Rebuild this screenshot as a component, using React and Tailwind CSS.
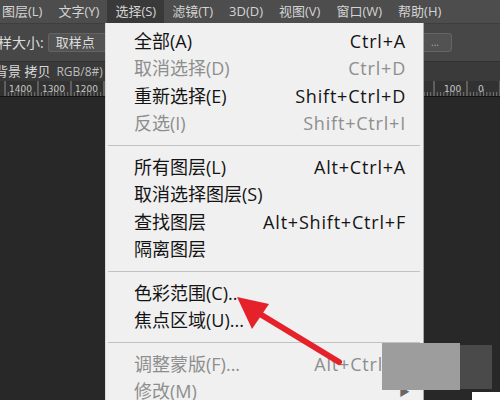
import React from 'react';

const menuFont = { fontFamily: '"Open Sans", "Noto Sans CJK SC", sans-serif' };

const topItems = ['图层(L)', '文字(Y)', '选择(S)', '滤镜(T)', '3D(D)', '视图(V)', '窗口(W)', '帮助(H)'];

const groups = [
  [
    { label: '全部(A)', key: 'Ctrl+A' },
    { label: '取消选择(D)', key: 'Ctrl+D', off: true },
    { label: '重新选择(E)', key: 'Shift+Ctrl+D' },
    { label: '反选(I)', key: 'Shift+Ctrl+I', off: true },
  ],
  [
    { label: '所有图层(L)', key: 'Alt+Ctrl+A' },
    { label: '取消选择图层(S)' },
    { label: '查找图层', key: 'Alt+Shift+Ctrl+F' },
    { label: '隔离图层' },
  ],
  [
    { label: '色彩范围(C)...' },
    { label: '焦点区域(U)...' },
  ],
  [
    { label: '调整蒙版(F)...', key: 'Alt+Ctrl+R', off: true },
    { label: '修改(M)', off: true, sub: true },
  ],
];

const Ruler = () => (
  <svg width="500" height="15" className="block">
    {Array.from({ length: 16 }).map((_, i) => {
      const x = 5 + i * 33;
      return (
        <g key={i}>
          <line x1={x} y1="0" x2={x} y2="15" stroke="#8a8a8a" strokeWidth="1" />
          {[1, 2, 3, 4, 5, 6, 7, 8, 9].map((j) => (
            <line key={j} x1={x + j * 3.3} y1={j === 5 ? 8 : 11} x2={x + j * 3.3} y2="15" stroke="#777" strokeWidth="1" />
          ))}
        </g>
      );
    })}
  </svg>
);

const App = () => {
  return (
    <div className="relative w-[500px] h-[400px] overflow-hidden bg-[#282828]" style={menuFont}>
      {/* menu bar */}
      <div className="h-[23px] bg-[#4d4d4d] flex items-center text-[13px] text-[#d4d4d4] ml-[-6px]">
        {topItems.map((t) => (
          <div key={t} className={`h-full flex items-center px-[8px] ${t === '选择(S)' ? 'bg-[#393939]' : ''}`}>
            {t}
          </div>
        ))}
      </div>

      {/* options bar */}
      <div className="h-[39px] bg-[#474747] border-t border-[#3e3e3e] border-b border-b-[#2f2f2f] flex items-center text-[14px] text-[#dcdcdc]">
        <span className="ml-[-2px]">样大小:</span>
        <div className="ml-[4px] w-[120px] h-[19px] bg-[#535353] border border-[#636363] rounded-[2px] flex items-center px-[7px] text-[13px]">
          取样点
        </div>
        <div className="ml-auto mr-[48px] w-[34px] h-[19px] bg-[#525252] border border-[#656565] rounded-[3px] flex items-center justify-center text-[10px] text-[#aaa]">
          ...
        </div>
      </div>

      {/* document tab */}
      <div className="h-[19px] bg-[#3a3a3a] flex items-center text-[13px] text-[#d8d8d8] whitespace-nowrap">
        <span className="ml-[-5px]">背景 拷贝</span>
        <span className="ml-[6px] text-[12px] text-[#bdbdbd]">RGB/8#)</span>
      </div>

      {/* ruler */}
      <div className="relative h-[16px] bg-[#323232] border-b border-[#141414]">
        <Ruler />
        <div className="absolute inset-0 text-[9px] text-[#c8c8c8] leading-[16px]" style={{ fontFamily: '"DejaVu Sans", sans-serif' }}>
          <span className="absolute left-[9px] top-0">1400</span>
          <span className="absolute left-[42px] top-0">1300</span>
          <span className="absolute left-[75px] top-0">1200</span>
          <span className="absolute left-[444px] top-0">100</span>
          <span className="absolute left-[478px] top-0">0</span>
        </div>
      </div>

      {/* dropdown menu */}
      <div className="absolute left-[105px] top-[23px] w-[319px] h-[390px] bg-[#f0f0f0] border-l border-[#d9d9d9] border-r border-r-[#a9a9a9] pt-[4.5px] text-[18px]">
        {groups.map((g, gi) => (
          <div key={gi}>
            {gi > 0 && (
              <div className="h-[16px] flex items-center pl-[2px] pr-[3px]">
                <div className="h-px w-full bg-[#c2c2c2]" />
              </div>
            )}
            {g.map((it) => (
              <div key={it.label} className={`h-[27.5px] flex items-center pl-[28px] pr-[18px] whitespace-nowrap ${it.off ? 'text-[#8e8e8e]' : 'text-[#141414]'}`}>
                <span>{it.label}</span>
                {it.key && <span className="ml-auto tracking-[0.8px] mr-[-1px]">{it.key}</span>}
                {it.sub && <span className="ml-auto mr-[-5px] text-[11px] text-[#666]">▶</span>}
              </div>
            ))}
          </div>
        ))}
      </div>

      {/* gray patches over the corner */}
      <div className="absolute left-[460px] top-[345px] w-[32px] h-[44px] bg-[#4a4a4a]" />
      <div className="absolute left-[382px] top-[343px] w-[78px] h-[47px] bg-[#9d9d9d]" />
      <div className="absolute left-[472px] top-[392px] w-[28px] h-[8px] bg-white" />

      {/* red arrow */}
      <svg className="absolute left-0 top-0" width="500" height="400">
        <line x1="339" y1="362" x2="255" y2="311" stroke="#e5222a" strokeWidth="6" strokeLinecap="round" />
        <polygon points="237,297 269,304 252,329" fill="#e5222a" />
      </svg>
    </div>
  );
};

export default App;
